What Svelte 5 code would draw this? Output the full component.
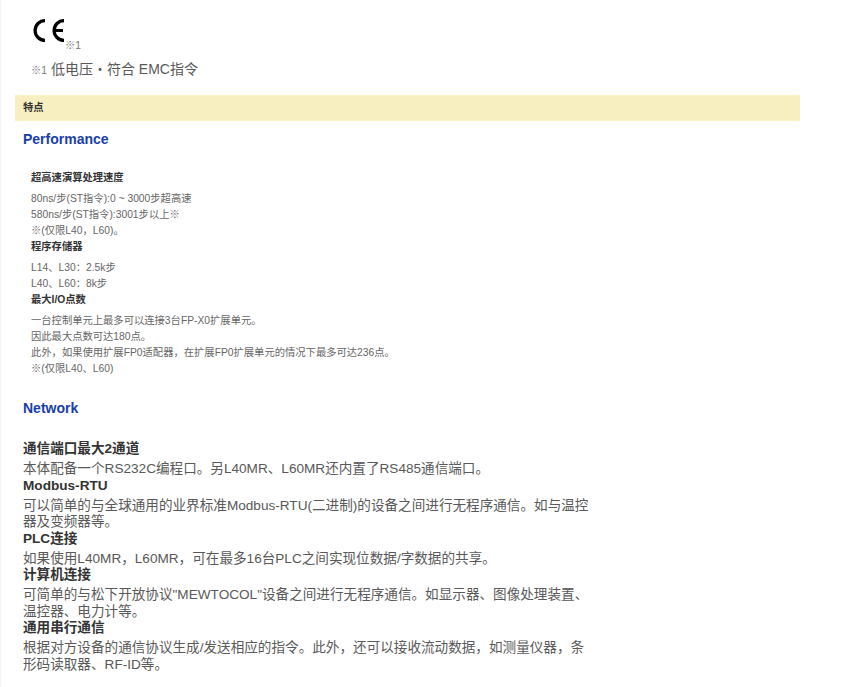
<script lang="ts">
    const small = [
        { title: '超高速演算处理速度', lines: ['80ns/步(ST指令):0 ~ 3000步超高速', '580ns/步(ST指令):3001步以上※', '※(仅限L40，L60)。'] },
        { title: '程序存储器', lines: ['L14、L30：2.5k步', 'L40、L60：8k步'] },
        { title: '最大I/O点数', lines: ['一台控制单元上最多可以连接3台FP-X0扩展单元。', '因此最大点数可达180点。', '此外，如果使用扩展FP0适配器，在扩展FP0扩展单元的情况下最多可达236点。', '※(仅限L40、L60)'] }
    ];
    const large = [
        { title: '通信端口最大2通道', text: '本体配备一个RS232C编程口。另L40MR、L60MR还内置了RS485通信端口。' },
        { title: 'Modbus-RTU', text: '可以简单的与全球通用的业界标准Modbus-RTU(二进制)的设备之间进行无程序通信。如与温控器及变频器等。' },
        { title: 'PLC连接', text: '如果使用L40MR，L60MR，可在最多16台PLC之间实现位数据/字数据的共享。' },
        { title: '计算机连接', text: '可简单的与松下开放协议"MEWTOCOL"设备之间进行无程序通信。如显示器、图像处理装置、温控器、电力计等。' },
        { title: '通用串行通信', text: '根据对方设备的通信协议生成/发送相应的指令。此外，还可以接收流动数据，如测量仪器，条形码读取器、RF-ID等。' }
    ];
</script>

<div class="page">
    <div class="cert">
        <div class="mark">
            <svg width="32" height="23" viewBox="0 0 32 23" fill="none" stroke="#000" stroke-width="3.2">
                <path d="M12 1.6 A9.9 9.9 0 0 0 12 21.4" />
                <path d="M31 1.6 A9.9 9.9 0 0 0 31 21.4 M21 11.5 H30" />
            </svg>
            <span class="note">※1</span>
        </div>
        <p class="cert-text"><span class="note">※1</span> 低电压・符合 EMC指令</p>
    </div>

    <div class="banner">特点</div>

    <h2 class="first">Performance</h2>
    <div class="small">
        {#each small as s}
            <h4>{s.title}</h4>
            {#each s.lines as line}
                <p>{line}</p>
            {/each}
        {/each}
    </div>

    <h2 class="second">Network</h2>
    <div class="large">
        {#each large as s}
            <h4>{s.title}</h4>
            <p>{s.text}</p>
        {/each}
    </div>
</div>

<style>
    :global(body) {
        background: #fff;
    }

    .page {
        font-family: "Liberation Sans", "Noto Sans CJK SC", sans-serif;
        color: #595959;
        width: 860px;
        height: 687px;
        overflow: hidden;
        box-sizing: border-box;
        border-left: 1px solid #f4f4f4;
        padding: 19px 60px 0 14px;
    }

    .cert {
        padding-left: 16px;
    }

    .mark {
        display: flex;
        align-items: flex-end;
        height: 33px;
        padding-left: 2px;
    }

    .mark svg {
        margin-bottom: 10px;
    }

    .note {
        font-size: 10.3px;
        color: #777;
    }

    .cert-text {
        margin: 8px 0 0;
        font-size: 14px;
        line-height: 18px;
    }

    .banner {
        margin-top: 15px;
        height: 26px;
        line-height: 26px;
        background: #f8efc0;
        color: #333;
        font-size: 10.3px;
        font-weight: bold;
        padding-left: 8px;
    }

    h2 {
        margin: 0;
        padding-left: 8px;
        font-size: 14px;
        line-height: 18px;
        font-weight: bold;
        color: #1a3ea8;
    }

    h2.first {
        margin-top: 9px;
    }

    h2.second {
        margin-top: 22px;
    }

    .small {
        margin-top: 22px;
        padding-left: 16px;
    }

    .small h4 {
        margin: 0 0 5px;
        font-size: 10.3px;
        line-height: 16px;
        color: #333;
    }

    .small p {
        margin: 0;
        font-size: 10.3px;
        line-height: 16px;
        color: #666;
    }

    .large {
        margin-top: 24px;
        padding-left: 8px;
        width: 570px;
    }

    .large h4 {
        margin: 0 0 3.5px;
        font-size: 13.6px;
        line-height: 16.5px;
        color: #333;
    }

    .large p {
        margin: 0;
        font-size: 13.6px;
        line-height: 16.5px;
    }
</style>
